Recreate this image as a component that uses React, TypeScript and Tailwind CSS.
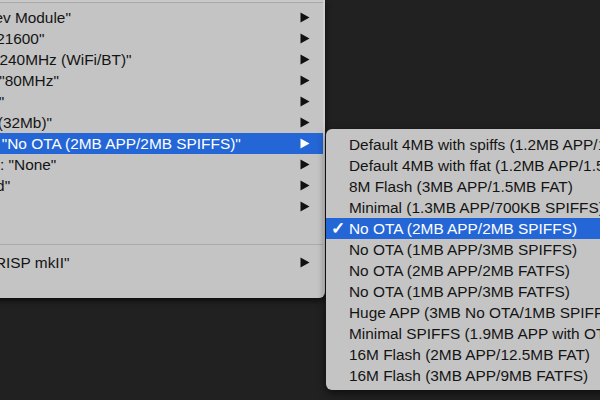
const leftItems: { label: string; arrow?: boolean; active?: boolean; sep?: boolean }[] = [
  { label: 'Board: "ESP32 Dev Module"', arrow: true },
  { label: 'Upload Speed: "921600"', arrow: true },
  { label: 'CPU Frequency: "240MHz (WiFi/BT)"', arrow: true },
  { label: 'Flash Frequency: "80MHz"', arrow: true },
  { label: 'Flash Mode: "QIO"', arrow: true },
  { label: 'Flash Size: "4MB (32Mb)"', arrow: true },
  { label: 'Partition Scheme: "No OTA (2MB APP/2MB SPIFFS)"', arrow: true, active: true },
  { label: 'Core Debug Level: "None"', arrow: true },
  { label: 'PSRAM: "Disabled"', arrow: true },
  { label: "Port", arrow: true },
  { label: "Get Board Info" },
  { label: "", sep: true },
  { label: 'Programmer: "AVRISP mkII"', arrow: true },
  { label: "Burn Bootloader" },
];

const schemes = [
  "Default 4MB with spiffs (1.2MB APP/1.5MB SPIFFS)",
  "Default 4MB with ffat (1.2MB APP/1.5MB FATFS)",
  "8M Flash (3MB APP/1.5MB FAT)",
  "Minimal (1.3MB APP/700KB SPIFFS)",
  "No OTA (2MB APP/2MB SPIFFS)",
  "No OTA (1MB APP/3MB SPIFFS)",
  "No OTA (2MB APP/2MB FATFS)",
  "No OTA (1MB APP/3MB FATFS)",
  "Huge APP (3MB No OTA/1MB SPIFFS)",
  "Minimal SPIFFS (1.9MB APP with OTA/190KB SPIFFS)",
  "16M Flash (2MB APP/12.5MB FAT)",
  "16M Flash (3MB APP/9MB FATFS)",
];

function Arrow({ white }: { white?: boolean }) {
  return (
    <svg width="10" height="11" viewBox="0 0 10 11" className="shrink-0">
      <path d="M0.5 0.5 L9.5 5.5 L0.5 10.5 Z" fill={white ? "#ffffff" : "#111111"} />
    </svg>
  );
}

export default function App() {
  return (
    <div
      className="w-[600px] h-[400px] overflow-hidden bg-[#212121] flex items-start text-[15.4px] text-[#141414]"
      style={{ fontFamily: '"Liberation Sans", Arial, sans-serif' }}
    >
      {/* Tools menu, its left part is off screen */}
      <div className="-ml-[144px] w-[469px] shrink-0 bg-[#c4c4c4] rounded-br-[6px] border-r-[2px] border-[#d0d0d0] shadow-[0_3px_6px_rgba(0,0,0,0.6)] pb-[4px]">
        <div className="h-[2px] bg-[#c9c9c9]" />
        <div className="h-[1px] bg-[#a9a9a9]" />
        <div className="h-[3.5px]" />
        {leftItems.map((it, i) =>
          it.sep ? (
            <div key={i} className="h-[14px] flex items-center">
              <div className="w-full h-[1px] bg-[#aaaaaa]" />
            </div>
          ) : (
            <div
              key={i}
              className={`h-[21px] flex items-center justify-between pl-[20px] pr-[13px] whitespace-nowrap ${
                it.active ? "bg-[#2466d6] text-white" : ""
              }`}
            >
              <span className="leading-[21px]">{it.label}</span>
              {it.arrow && <Arrow white={it.active} />}
            </div>
          )
        )}
      </div>

      {/* Partition Scheme submenu */}
      <div className="mt-[129px] ml-[1px] w-[340px] shrink-0 bg-[#c4c4c4] rounded-l-[6px] shadow-[0_3px_8px_rgba(0,0,0,0.6)] py-[4.5px]">
        {schemes.map((s, i) => {
          const checked = i === 4;
          return (
            <div
              key={i}
              className={`h-[21px] flex items-center whitespace-nowrap ${
                checked ? "bg-[#2466d6] text-white" : ""
              }`}
            >
              <span className="w-[23px] shrink-0 text-center text-[17px] font-bold leading-[21px]">{checked ? "✓" : ""}</span>
              <span className="leading-[21px]">{s}</span>
            </div>
          );
        })}
      </div>
    </div>
  );
}
